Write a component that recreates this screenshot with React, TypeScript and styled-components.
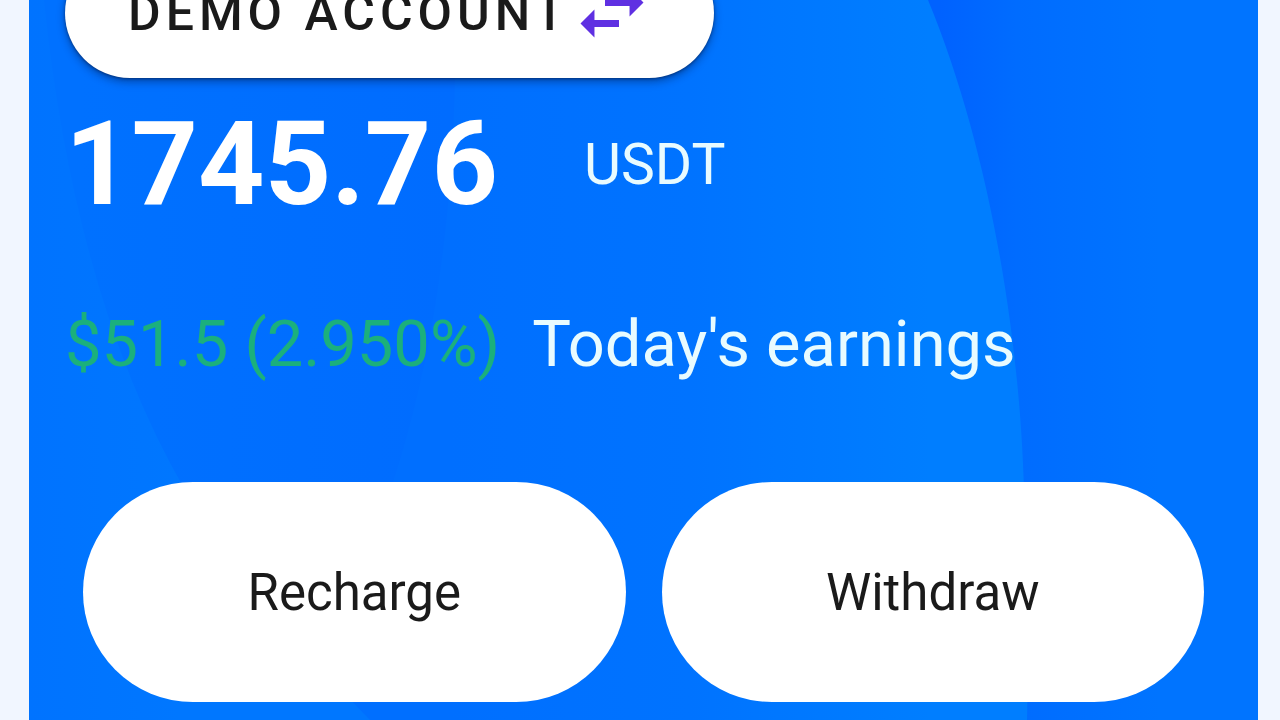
import React from 'react';
import styled, { createGlobalStyle } from 'styled-components';

const GlobalStyle = createGlobalStyle`
  * { box-sizing: border-box; }
  html, body { margin: 0; min-height: 100%; }
  body {
    background: #f1f6ff;
    font-family: Roboto, "Liberation Sans", sans-serif;
    overflow: hidden;
  }
  button { font-family: inherit; cursor: pointer; }
`;

const Page = styled.main`
  display: flex;
  min-height: 100vh;
  padding: 0 22px 0 29px;
  overflow: hidden;
`;

const Card = styled.section`
  position: relative;
  isolation: isolate;
  flex: 1;
  display: flex;
  flex-direction: column;
  align-items: flex-start;
  padding: 0 36px;
  background: #0071ff;
`;

const Waves = styled.svg`
  position: absolute;
  inset: 0;
  z-index: -1;
  width: 100%;
  height: 100%;
`;

const AccountButton = styled.button`
  display: flex;
  align-items: center;
  height: 130px;
  margin-top: -52px;
  padding: 0 60px 0 63px;
  border: 0;
  border-radius: 65px;
  background: #fff;
  color: #1a1a1a;
  font-size: 50px;
  font-weight: 500;
  letter-spacing: 5px;
  white-space: nowrap;
  box-shadow: 0 4px 8px rgba(0, 20, 60, 0.4), 0 1px 3px rgba(0, 20, 60, 0.5);
`;

const SwapIcon = styled.svg`
  width: 84px;
  height: 84px;
  fill: #5f30e2;
`;

const BalanceRow = styled.div`
  display: flex;
  align-items: center;
  gap: 86px;
  height: 172px;
  color: #fff;
`;

const Amount = styled.strong`
  font-size: 116px;
  font-weight: 700;
  line-height: 172px;
`;

const Currency = styled.span`
  color: #e8fbff;
  font-size: 57px;
`;

const Earnings = styled.p`
  display: flex;
  gap: 32px;
  margin: 56px 0 0;
  color: #e8fbff;
  font-size: 65px;
  line-height: 76px;
  white-space: nowrap;
`;

const Gain = styled.span`
  color: #1bb07c;
`;

const Actions = styled.div`
  display: flex;
  align-self: stretch;
  gap: 36px;
  margin-top: 100px;
  padding: 0 18px;
`;

const ActionButton = styled.button`
  flex: 1;
  height: 220px;
  border: 0;
  border-radius: 110px;
  background: #fff;
  color: #1a1a1a;
  font-size: 51px;
`;

export default function App() {
  return (
    <>
      <GlobalStyle />
      <Page>
        <Card>
          <Waves viewBox="29 0 1229 720" preserveAspectRatio="none" aria-hidden="true">
            <defs>
              <linearGradient id="shade" gradientUnits="userSpaceOnUse" x1="940" y1="0" x2="1160" y2="0">
                <stop offset="0" stopColor="#0062ff" />
                <stop offset="0.35" stopColor="#006cff" />
                <stop offset="1" stopColor="#0074ff" />
              </linearGradient>
              <linearGradient id="crest" gradientUnits="userSpaceOnUse" x1="450" y1="0" x2="930" y2="0">
                <stop offset="0" stopColor="#006fff" />
                <stop offset="0.5" stopColor="#0073ff" />
                <stop offset="1" stopColor="#007eff" />
              </linearGradient>
              <linearGradient id="fold" gradientUnits="userSpaceOnUse" x1="80" y1="0" x2="450" y2="0">
                <stop offset="0" stopColor="#0071ff" />
                <stop offset="1" stopColor="#006cff" />
              </linearGradient>
              <linearGradient id="edge" gradientUnits="userSpaceOnUse" x1="29" y1="0" x2="180" y2="0">
                <stop offset="0" stopColor="#0073ff" />
                <stop offset="1" stopColor="#0077ff" />
              </linearGradient>
            </defs>
            <rect x="29" width="1229" height="720" fill="url(#shade)" />
            <path d="M29 0H928C990 150 1020 340 1024 490Q1030 600 1027 720H29Z" fill="url(#crest)" />
            <path d="M29 0H455Q460 260 400 460Q350 620 290 720H29Z" fill="url(#fold)" />
            <path d="M29 0H44Q75 300 185 490Q270 620 370 720H29Z" fill="url(#edge)" />
          </Waves>
          <AccountButton type="button">
            DEMO ACCOUNT
            <SwapIcon viewBox="0 0 24 24" aria-hidden="true">
              <path d="M6.99 11 3 15l3.99 4v-3H14v-2H6.99v-3zM21 9l-3.99-4v3H10v2h7.01v3L21 9z" />
            </SwapIcon>
          </AccountButton>
          <BalanceRow>
            <Amount>1745.76</Amount>
            <Currency>USDT</Currency>
          </BalanceRow>
          <Earnings>
            <Gain>$51.5 (2.950%)</Gain>
            <span>Today's earnings</span>
          </Earnings>
          <Actions>
            <ActionButton type="button">Recharge</ActionButton>
            <ActionButton type="button">Withdraw</ActionButton>
          </Actions>
        </Card>
      </Page>
    </>
  );
}
